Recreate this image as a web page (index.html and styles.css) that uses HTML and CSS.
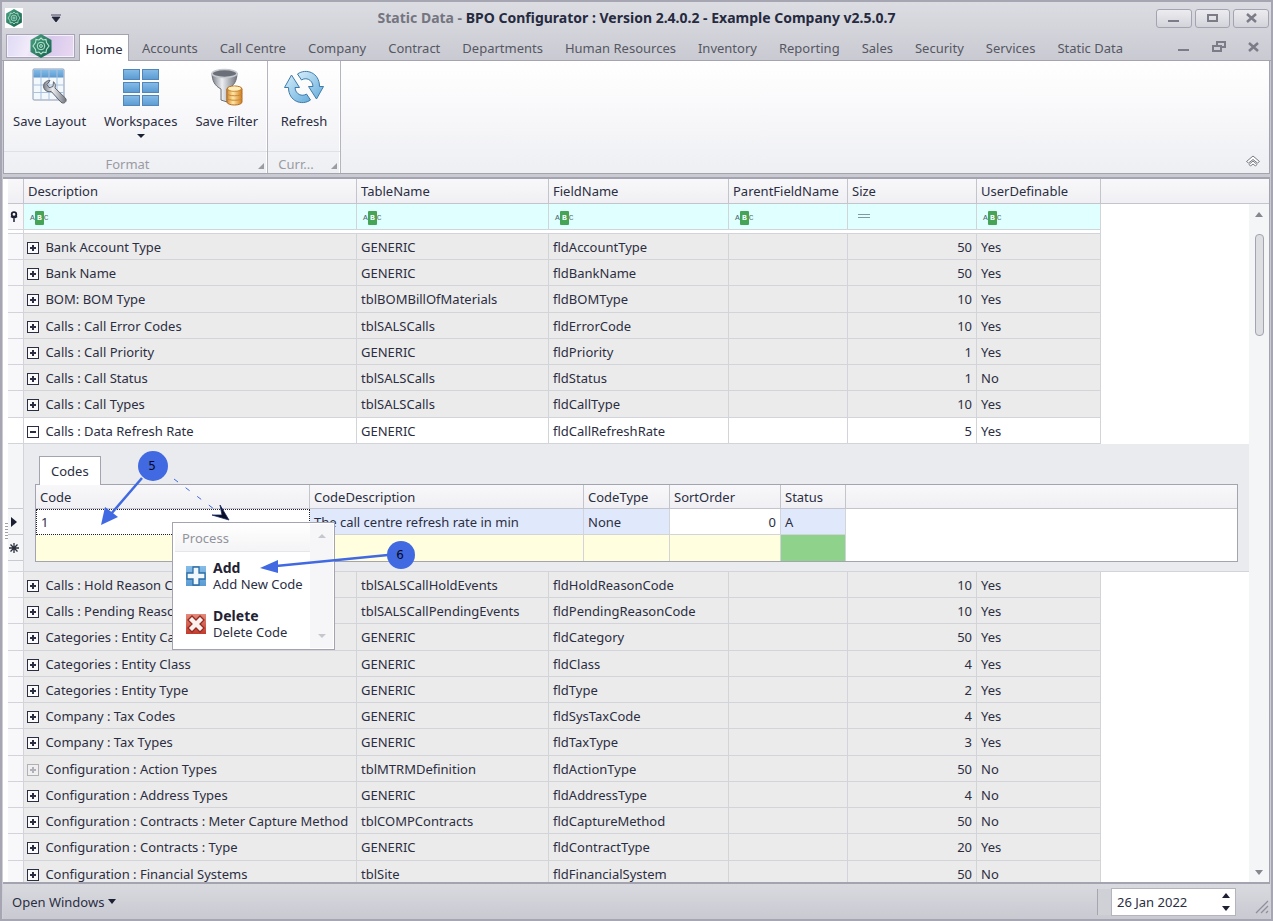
FILE: index.html
```html
<!DOCTYPE html>
<html lang="en">
<head>
<meta charset="utf-8">
<title>Static Data - BPO Configurator</title>
<link rel="stylesheet" href="styles.css">
<script src="grid.js" defer></script>
</head>
<body>
<svg class="defs" width="0" height="0" aria-hidden="true">
  <defs>
    <linearGradient id="green" x1="0" y1="0" x2="1" y2="1"><stop offset="0" stop-color="#4da283"/><stop offset="1" stop-color="#12604a"/></linearGradient>
    <linearGradient id="blue" x1="0" y1="0" x2="0" y2="1"><stop offset="0" stop-color="#86bde8"/><stop offset="1" stop-color="#5a9ad2"/></linearGradient>
    <linearGradient id="sky" x1="0" y1="0" x2="1" y2="1"><stop offset="0" stop-color="#d5eefa"/><stop offset="1" stop-color="#65acdc"/></linearGradient>
    <linearGradient id="steel" x1="0" y1="0" x2="1" y2="0"><stop offset="0" stop-color="#7c8088"/><stop offset=".4" stop-color="#eceef2"/><stop offset="1" stop-color="#70747c"/></linearGradient>
    <linearGradient id="gold" x1="0" y1="0" x2="1" y2="0"><stop offset="0" stop-color="#d78a2c"/><stop offset=".4" stop-color="#ffe7a6"/><stop offset="1" stop-color="#d07c1e"/></linearGradient>
    <linearGradient id="red" x1="0" y1="0" x2="0" y2="1"><stop offset="0" stop-color="#e58a7c"/><stop offset="1" stop-color="#c23a2b"/></linearGradient>
    <symbol id="logo" viewBox="0 0 24 24">
      <path d="M12 0l10.500 6v12L12 24 1.500 18V6z" fill="url(#green)"/>
      <path d="M12 4l2 2 3-.5.5 3L20 12l-2.500 3.500-.5 3-3-.5-2 2-2-2-3 .5-.5-3L4 12l2.500-3.500.5-3 3 .5z" fill="none" stroke="#b9e5d2" stroke-width="1.100"/>
      <circle cx="12" cy="12" r="3.800" fill="none" stroke="#b9e5d2"/><circle cx="12" cy="12" r="1.400" fill="none" stroke="#b9e5d2"/>
    </symbol>
  </defs>
</svg>

<div class="window">
  <header class="titlebar">
    <div class="quick">
      <svg class="applogo" width="18" height="20"><use href="#logo"/></svg>
      <button class="plain" aria-label="Customize toolbar"><svg width="10" height="8"><path d="M0 1h10M1 3h8L5 8z" fill="#22253a" stroke="#22253a" stroke-width=".8"/></svg></button>
    </div>
    <h1><span>Static Data -</span> BPO Configurator : Version 2.4.0.2 - Example Company v2.5.0.7</h1>
    <div class="winbtns">
      <button aria-label="Minimize"><svg width="13" height="12"><path d="M1 9h11" stroke="#7b7c88" stroke-width="2"/></svg></button>
      <button aria-label="Maximize"><svg width="13" height="12"><path d="M2 3h9v6H2z" fill="none" stroke="#7b7c88" stroke-width="2"/></svg></button>
      <button aria-label="Close"><svg width="13" height="12"><path d="M2 2l9 8M11 2l-9 8" stroke="#7b7c88" stroke-width="2.500"/></svg></button>
    </div>
  </header>

  <nav class="tabs">
    <button class="appbtn" aria-label="Application menu"><svg width="24" height="24"><use href="#logo"/></svg></button>
    <button class="tab active">Home</button><button class="tab">Accounts</button><button class="tab">Call Centre</button><button class="tab">Company</button><button class="tab">Contract</button><button class="tab">Departments</button><button class="tab">Human Resources</button><button class="tab">Inventory</button><button class="tab">Reporting</button><button class="tab">Sales</button><button class="tab">Security</button><button class="tab">Services</button><button class="tab">Static Data</button>
    <div class="mdibtns">
      <button class="plain" aria-label="Minimize document"><svg width="14" height="12"><path d="M1 9h11" stroke="#7b7c88" stroke-width="2"/></svg></button>
      <button class="plain" aria-label="Restore document"><svg width="14" height="12"><path d="M5 5V1h8v5H9M1 5h8v5H1z" fill="none" stroke="#7b7c88" stroke-width="2"/></svg></button>
      <button class="plain" aria-label="Close document"><svg width="14" height="12"><path d="M2 2l9 8M11 2l-9 8" stroke="#7b7c88" stroke-width="2.500"/></svg></button>
    </div>
  </nav>

  <section class="ribbon">
    <div class="group">
      <div class="tools">
        <button class="tool">
          <svg width="38" height="38" viewBox="0 0 38 38">
            <rect x="2" y="1" width="31" height="31" rx="1" fill="#f3f8fd" stroke="#8c99b0"/>
            <path d="M2.500 1.500h30v8h-30z" fill="url(#blue)"/>
            <path d="M10 1v31M18 1v31M26 1v31M2 9.500h31M2 17h31M2 24.500h31" stroke="#a9c2df"/>
            <path d="M19 12.500c-5 0-7.500 4-6 7.800 1.200 3 4.500 4 7.200 3.100l9.700 10.700c2.800 2.800 7-.9 4.500-4L24 20c1-3.300-.2-5-1.500-6.300l-.5 4.800-4 1.200-2-3.200z" fill="url(#steel)" stroke="#5e646e"/>
          </svg>
          <span>Save Layout</span>
        </button>
        <button class="tool">
          <svg width="38" height="38" viewBox="0 0 38 38"><g fill="url(#blue)" stroke="#5286b8"><rect x="1.500" y="1.500" width="16" height="10"/><rect x="20.500" y="1.500" width="16" height="10"/><rect x="1.500" y="14.500" width="16" height="10"/><rect x="20.500" y="14.500" width="16" height="10"/><rect x="1.500" y="27.500" width="16" height="10"/><rect x="20.500" y="27.500" width="16" height="10"/></g></svg>
          <span>Workspaces</span>
          <svg class="drop" width="8" height="4"><path d="M0 0h8L4 4z" fill="#1d2033"/></svg>
        </button>
        <button class="tool">
          <svg width="38" height="38" viewBox="0 0 38 38">
            <path d="M4 5c0 8 3 13 9 16v11l6 2V21c7-3 10-8 10-16z" fill="url(#steel)" stroke="#6c7079"/>
            <ellipse cx="16.500" cy="5.500" rx="12.500" ry="4" fill="#6b7078" stroke="#c6c9ce" stroke-width="1.500"/>
            <path d="M19 21c0-4 15-4 15 0v13c0 4-15 4-15 0z" fill="url(#gold)" stroke="#b36d22"/>
            <path d="M19 21c0 3 15 3 15 0M19 25.500c0 3 15 3 15 0M19 30c0 3 15 3 15 0" fill="none" stroke="#c98635"/>
            <ellipse cx="26.500" cy="20.500" rx="6.500" ry="2" fill="#ffeebb"/>
          </svg>
          <span>Save Filter</span>
        </button>
      </div>
      <div class="caption">Format<i class="launcher"></i></div>
    </div>
    <div class="group">
      <div class="tools">
        <button class="tool">
          <svg width="40" height="38" viewBox="0 0 40 38"><g fill="url(#sky)" stroke="#3f7ba9">
            <path d="M13.500 6C22 0 35.500 4.500 35.500 18.500h4L32.500 31 24.500 18.500H29C28.500 11.500 22 9 17.500 12z"/>
            <path d="M26.500 32C18 38 4.500 33.500 4.500 19.500h-4L7.500 7l8 12.500H11C11.500 26.500 18 29 22.500 26z"/></g></svg>
          <span>Refresh</span>
        </button>
      </div>
      <div class="caption">Curr...<i class="launcher"></i></div>
    </div>
    <button class="plain collapse" aria-label="Collapse ribbon"><svg width="16" height="12"><path d="M1.500 6.500L8 1l6.500 5.500-2 1.500L8 4.500 3.500 8zM4 9.500L8 6l4 3.500-1.500 1.500L8 9l-2.500 2z" fill="#fff" stroke="#777985"/></svg></button>
  </section>

  <main class="grid">
    <div class="sheet">
      <table class="main">
        <colgroup><col class="c-ind"><col class="c-desc"><col class="c-table"><col class="c-field"><col class="c-parent"><col class="c-size"><col class="c-user"><col></colgroup>
        <thead>
          <tr class="head"><th></th><th>Description</th><th>TableName</th><th>FieldName</th><th>ParentFieldName</th><th>Size</th><th>UserDefinable</th><th class="rest"></th></tr>
          <tr class="filter"><td class="ind"><svg width="8" height="11"><circle cx="4" cy="3.500" r="2.300" fill="#fff" stroke="#1d2033" stroke-width="1.800"/><path d="M1 5.500h6L4 7zM4 6v5" fill="#1d2033" stroke="#1d2033" stroke-width="1.500"/></svg></td>
            <td><span class="abc">A<b>B</b>C</span></td><td><span class="abc">A<b>B</b>C</span></td><td><span class="abc">A<b>B</b>C</span></td><td><span class="abc">A<b>B</b>C</span></td>
            <td><svg class="eq" width="12" height="5"><path d="M0 .5h12M0 3.500h12" stroke="#7e99a2"/></svg></td><td><span class="abc">A<b>B</b>C</span></td><td class="rest"></td></tr>
          <tr class="gap"><td></td><td colspan="6"></td><td class="rest"></td></tr>
        </thead>
        <tbody id="upper"></tbody>
        <tbody>
          <tr class="detail">
            <td class="markers"><div class="marks"><i></i><i><svg width="6" height="10"><path d="M0 0l6 5-6 5z" fill="#1d2033"/></svg></i><i><svg width="10" height="10"><path d="M5 0v10M0 5h10M1.500 1.500l7 7M8.500 1.500l-7 7" stroke="#2b2e3c" stroke-width="1.300"/></svg></i><i></i></div></td>
            <td colspan="7">
              <div class="sub">
                <button class="subtab">Codes</button>
                <div class="subgrid">
                  <table class="codes">
                    <colgroup><col class="s-code"><col class="s-desc"><col class="s-type"><col class="s-sort"><col class="s-status"><col></colgroup>
                    <thead><tr><th>Code</th><th>CodeDescription</th><th>CodeType</th><th>SortOrder</th><th>Status</th><th class="rest"></th></tr></thead>
                    <tbody>
                      <tr class="current"><td class="focus">1</td><td>The call centre refresh rate in min</td><td>None</td><td class="num">0</td><td>A</td><td class="rest"></td></tr>
                      <tr class="new"><td></td><td></td><td></td><td></td><td class="ok"></td><td class="rest"></td></tr>
                    </tbody>
                  </table>
                </div>
              </div>
            </td>
          </tr>
        </tbody>
        <tbody id="lower"></tbody>
      </table>
    </div>
    <div class="scroll">
      <div class="scrollhead"></div>
      <div class="track"><svg width="8" height="5"><path d="M0 5h8L4 0z" fill="#85868e"/></svg><div class="thumb"></div><svg class="down" width="8" height="5"><path d="M0 0h8L4 5z" fill="#85868e"/></svg></div>
    </div>
  </main>

  <footer class="status">
    <button class="plain open">Open Windows <svg width="8" height="5"><path d="M0 0h8L4 5z" fill="#1d2033"/></svg></button>
    <div class="datebox">
      <input type="text" value="26 Jan 2022" aria-label="Date">
      <span class="spin"><button class="plain" aria-label="Next day"><svg width="8" height="5"><path d="M0 5h8L4 0z" fill="#1d2033"/></svg></button><button class="plain" aria-label="Previous day"><svg width="8" height="5"><path d="M0 0h8L4 5z" fill="#1d2033"/></svg></button></span>
    </div>
    <svg class="grip" width="14" height="14"><path d="M1 13L13 1M6 13l7-7M11 13l2-2" stroke="#8f909b" stroke-width="1.300"/></svg>
  </footer>
</div>

<i class="splitgrip"></i>

<div class="menu" role="menu">
  <div class="menubody">
    <div class="menuhead">Process</div>
    <button class="item" role="menuitem">
      <svg width="20" height="20"><rect width="20" height="20" fill="url(#blue)"/><path d="M7 1h6v6h6v6h-6v6H7v-6H1V7h6z" fill="#f1f8fd" stroke="#2d6ca3" stroke-width="1.300"/></svg>
      <span><b>Add</b>Add New Code</span>
    </button>
    <button class="item" role="menuitem">
      <svg width="20" height="20"><rect width="20" height="20" fill="url(#red)"/><path d="M6 2l4 4 4-4 4 4-4 4 4 4-4 4-4-4-4 4-4-4 4-4-4-4z" fill="#fbf1ef" stroke="#922c22" stroke-width="1.300"/></svg>
      <span><b>Delete</b>Delete Code</span>
    </button>
  </div>
  <div class="menuscroll"><svg width="8" height="4"><path d="M0 4h8L4 0z" fill="#c6c7cc"/></svg><svg width="8" height="4"><path d="M0 0h8L4 4z" fill="#c6c7cc"/></svg></div>
</div>

<svg class="notes" width="460" height="600">
  <g stroke="#4169e1" fill="#4169e1">
    <path d="M142 478l-31 36" stroke-width="2.500"/><path d="M101 525l4-18 13 10z" stroke="none"/>
    <path d="M388 555l-112 11" stroke-width="2.500"/><path d="M260 568l18-8v13z" stroke="none"/>
    <path d="M174 479l40 30" stroke-dasharray="5 9.500" fill="none"/>
    <path d="M229 520l-9-15 2 10-10 0z" fill="#0a0d24" stroke="#1b2a66" stroke-width=".8"/>
    <circle cx="153" cy="466" r="15" stroke="none"/><circle cx="401" cy="555" r="14" stroke="none"/>
  </g>
  <text x="152" y="470">5</text><text x="400" y="559">6</text>
</svg>
</body>
</html>
```
FILE: styles.css
```css
* { box-sizing: border-box; }
body { margin: 0; font: 13px/18px "Noto Sans", "DejaVu Sans", sans-serif; color: #2b2e42; background: #cbccd4; }
button, input { font: inherit; color: inherit; margin: 0; }
button { padding: 0; border: 0; background: none; }
.defs { position: absolute; }
svg { display: block; flex: none; }
.plain { display: flex; align-items: center; justify-content: center; }
.window { height: 100vh; display: flex; flex-direction: column; border: 2px solid #a5a6b1; overflow: hidden; background: linear-gradient(#dcdde3, #c9cad1 60px, #d0d1d8); }

.titlebar { height: 32px; flex: none; display: flex; align-items: center; padding: 0 2px 0 3px; }
.quick { width: 112px; display: flex; gap: 28px; align-items: center; }
.applogo { background: #fff; }
.titlebar h1 { flex: 1; margin: 0; text-align: center; font-size: 14px; line-height: 20px; color: #262a40; white-space: nowrap; }
.titlebar h1 span { color: #74757f; }
.winbtns { width: 113px; display: flex; gap: 3px; }
.winbtns button { flex: 1; height: 19px; display: flex; align-items: center; justify-content: center; border: 1px solid #a3a4b0; border-radius: 3px; background: linear-gradient(#ececf0, #d3d4da); }

.tabs { height: 27px; flex: none; display: flex; align-items: stretch; padding-left: 4px; border-bottom: 1px solid #a3a4af; }
.appbtn { width: 69px; height: 24px; display: flex; justify-content: center; align-items: center; margin-right: 4px; border: 1px solid #a8a3b8; background: linear-gradient(110deg, #dfd9f5, #f1ebfa 35%, #d8c8ec 60%, #ead9f2); box-shadow: inset 0 0 0 1px #f6f2fb; }
.tab { padding: 1px 11px 0; color: #555763; white-space: nowrap; }
.tab.active { width: 50px; padding: 1px 0 0; margin: 0 2px -1px 0; background: #fff; border: 1px solid #a3a4af; border-bottom: 0; color: #2b2e42; }
.mdibtns { margin-left: auto; display: flex; gap: 21px; padding-right: 10px; align-items: center; }

.ribbon { height: 113px; flex: none; display: flex; margin: 0 1px; background: linear-gradient(#fff, #f9f9fb 40%, #eeeff3); border: 1px solid #a3a4af; border-top: 0; }
.group { display: flex; flex-direction: column; border-right: 1px solid #b4b5be; box-shadow: inset -1px 0 #fff; padding: 7px 0 0; }
.tools { flex: 1; display: flex; }
.tool { min-width: 72px; padding: 0 9px; display: flex; flex-direction: column; align-items: center; justify-content: flex-start; white-space: nowrap; }
.tool span { margin: 6px 0 4px; }
.caption { position: relative; height: 22px; padding-right: 16px; text-align: center; line-height: 24px; color: #9a9ba3; border-top: 1px solid #e0e1e6; }
.launcher { position: absolute; right: 3px; bottom: 4px; border: 3px solid; border-color: transparent #9a9ba3 #9a9ba3 transparent; }
.collapse { margin: 0 8px 6px auto; align-self: flex-end; }

.grid { flex: 1; min-height: 0; display: flex; margin: 3px 1px 0; border: solid #a3a4af; border-width: 2px 1px 2px 0; overflow: hidden; background: #fff; padding-left: 5px; }
.sheet { flex: 1; overflow: hidden; }
table { border-collapse: separate; border-spacing: 0; table-layout: fixed; width: 100%; }
th, td { padding: 0 4px; height: 26px; font-weight: 400; text-align: left; white-space: nowrap; overflow: hidden; border-right: 1px solid #d3d4da; border-bottom: 1px solid #d3d4da; }
.c-ind { width: 16px; } .c-desc { width: 333px; } .c-table { width: 192px; } .c-field { width: 180px; } .c-parent { width: 119px; } .c-size { width: 129px; } .c-user { width: 124px; }
.head th, .codes th, .scrollhead { background: linear-gradient(#f8f8fa, #f0f0f4); border-color: #c3c4cc; }
.head th { height: 25px; }
.filter td { height: 26px; background: #e0ffff; }
.main td.ind, .filter .ind { background: #f8f8fb; padding: 0 2px; }
.gap td { height: 4px; background: #fff; }
.main td.rest { background: #fff; border: 0; }
.main th.rest { border-right: 0; }
.rows td { background: #ebebeb; }
.rows tr:nth-child(4n+3) td { height: 27px; }
.rows tr.selected td { background: #fff; }
.num { text-align: right; }
.rows button { display: inline-block; width: 12px; height: 12px; margin-right: 3px; vertical-align: -1px; border: 1px solid #2b2e42; background: linear-gradient(#2b2e42, #2b2e42) center / 6px 2px no-repeat, linear-gradient(#2b2e42, #2b2e42) center / 2px 6px no-repeat, #fafafa; }
.rows .selected button { background: linear-gradient(#2b2e42, #2b2e42) center / 6px 2px no-repeat; }
.rows button:disabled { opacity: .3; }
.rows td.name { padding-left: 3px; }
.abc { display: inline-flex; align-items: center; margin-left: 2px; vertical-align: middle; font: 8px/12px "Liberation Mono", monospace; color: #4f696c; }
.abc b { width: 9px; height: 14px; line-height: 14px; text-align: center; color: #fff; background: #45a455; border-radius: 1px; }
.eq { margin-left: 6px; }

.detail > td { height: 128px; padding: 0; background: #eaebee; vertical-align: top; border-right: 0; }
.detail > td.markers { background: #f5f6f8; border-right: 1px solid #d3d4da; }
.marks i { display: flex; align-items: center; justify-content: flex-start; padding-left: 3px; height: 26px; border-bottom: 1px solid #c9cad1; }
.marks i:nth-child(3) { padding-left: 1px; }
.marks i:first-child { height: 65px; }
.marks i:last-child { height: 10px; border: 0; }
.sub { padding: 12px 11px 0; }
.subtab { display: block; height: 29px; margin: 0 0 -1px 4px; padding: 0 11px; position: relative; background: #fff; border: 1px solid #a3a4af; border-bottom: 0; }
.subgrid { border: 1px solid #a3a4af; background: #fff; }
.s-code { width: 274px; } .s-desc { width: 274px; } .s-type { width: 86px; } .s-sort { width: 111px; } .s-status { width: 65px; }
.codes th { height: 24px; }
.codes .rest { border-right: 0; }
.codes .current td { background: #e0e9fc; }
.codes .current td.focus { background: #fff; border: 1px dotted #1d2033; }
.codes .current td.num, .codes .current td.rest { background: #fff; }
.codes .new td { background: #ffffe0; border-bottom: 0; }
.codes .new td.ok { background: #8fd28b; }
.codes .new td.rest { background: #fff; }

.scroll { width: 20px; display: flex; flex-direction: column; }
.scrollhead { height: 25px; border-bottom: 1px solid #c3c4cc; }
.track { flex: 1; display: flex; flex-direction: column; align-items: center; padding: 8px 0 7px; background: #f4f5f7; }
.thumb { width: 9px; height: 102px; margin-top: 17px; border: 1px solid #a3a4af; border-radius: 4px; background: #dddee2; }
.down { margin-top: auto; }

.status { height: 35px; flex: none; display: flex; align-items: center; margin: 0 1px; padding: 0 1px 0 9px; background: linear-gradient(#d9dae0, #c9cad1); }
.open { gap: 4px; }
.datebox { display: flex; align-items: center; width: 125px; height: 28px; margin-left: auto; background: #fff; border: 1px solid #b3b4bd; box-shadow: -14px 0 0 -1px #d0d1d7, -15px 0 0 -1px #a5a6b0; }
.datebox input { flex: 1; min-width: 0; border: 0; background: none; padding: 0 5px; }
.spin { display: flex; flex-direction: column; gap: 8px; padding-right: 5px; }
.grip { margin: 10px 0 0 19px; }

.splitgrip { position: absolute; left: 5px; top: 523px; width: 3px; height: 17px; background: repeating-linear-gradient(#9d9eaa 0 1px, transparent 1px 3px); }
.menu { position: absolute; left: 172px; top: 522px; width: 163px; height: 128px; display: flex; border: 1px solid #a3a4af; background: #fff; padding: 1px; }
.menubody { flex: 1; padding-left: 1px; }
.menuhead { height: 28px; padding: 5px 7px; color: #92939b; border-bottom: 1px solid #e6e6ea; background: linear-gradient(#fff, #f4f4f6); }
.item { display: flex; align-items: center; gap: 7px; height: 48px; padding-left: 11px; text-align: left; line-height: 16px; }
.item b { display: block; font-size: 14px; color: #1f2233; }
.menuscroll { width: 23px; display: flex; flex-direction: column; justify-content: space-between; align-items: center; padding: 10px 0; background: #f6f6f8; }
.notes { position: absolute; left: 0; top: 0; pointer-events: none; }
.notes text { font: 12px "DejaVu Sans", sans-serif; text-anchor: middle; fill: #05081c; }
```
FILE: grid.js
```js
const upper = [
  ["Bank Account Type", "GENERIC", "fldAccountType", 50, "Yes"],
  ["Bank Name", "GENERIC", "fldBankName", 50, "Yes"],
  ["BOM: BOM Type", "tblBOMBillOfMaterials", "fldBOMType", 10, "Yes"],
  ["Calls : Call Error Codes", "tblSALSCalls", "fldErrorCode", 10, "Yes"],
  ["Calls : Call Priority", "GENERIC", "fldPriority", 1, "Yes"],
  ["Calls : Call Status", "tblSALSCalls", "fldStatus", 1, "No"],
  ["Calls : Call Types", "tblSALSCalls", "fldCallType", 10, "Yes"],
  ["Calls : Data Refresh Rate", "GENERIC", "fldCallRefreshRate", 5, "Yes", "selected"]
];
const lower = [
  ["Calls : Hold Reason Codes", "tblSALSCallHoldEvents", "fldHoldReasonCode", 10, "Yes"],
  ["Calls : Pending Reason Codes", "tblSALSCallPendingEvents", "fldPendingReasonCode", 10, "Yes"],
  ["Categories : Entity Category", "GENERIC", "fldCategory", 50, "Yes"],
  ["Categories : Entity Class", "GENERIC", "fldClass", 4, "Yes"],
  ["Categories : Entity Type", "GENERIC", "fldType", 2, "Yes"],
  ["Company : Tax Codes", "GENERIC", "fldSysTaxCode", 4, "Yes"],
  ["Company : Tax Types", "GENERIC", "fldTaxType", 3, "Yes"],
  ["Configuration : Action Types", "tblMTRMDefinition", "fldActionType", 50, "No", "empty"],
  ["Configuration : Address Types", "GENERIC", "fldAddressType", 4, "No"],
  ["Configuration : Contracts : Meter Capture Method", "tblCOMPContracts", "fldCaptureMethod", 50, "No"],
  ["Configuration : Contracts : Type", "GENERIC", "fldContractType", 20, "Yes"],
  ["Configuration : Financial Systems", "tblSite", "fldFinancialSystem", 50, "No"]
];
function fill(id, rows) {
  const body = document.getElementById(id);
  body.className = "rows";
  body.innerHTML = rows.map(([name, table, field, size, user, state = ""]) =>
    `<tr class="${state}"><td class="ind"></td>` +
    `<td class="name"><button aria-label="Expand ${name}"${state === "empty" ? " disabled" : ""}></button> ${name}</td>` +
    `<td>${table}</td><td>${field}</td><td></td><td class="num">${size}</td><td>${user}</td><td class="rest"></td></tr>`).join("");
}
fill("upper", upper);
fill("lower", lower);
```
